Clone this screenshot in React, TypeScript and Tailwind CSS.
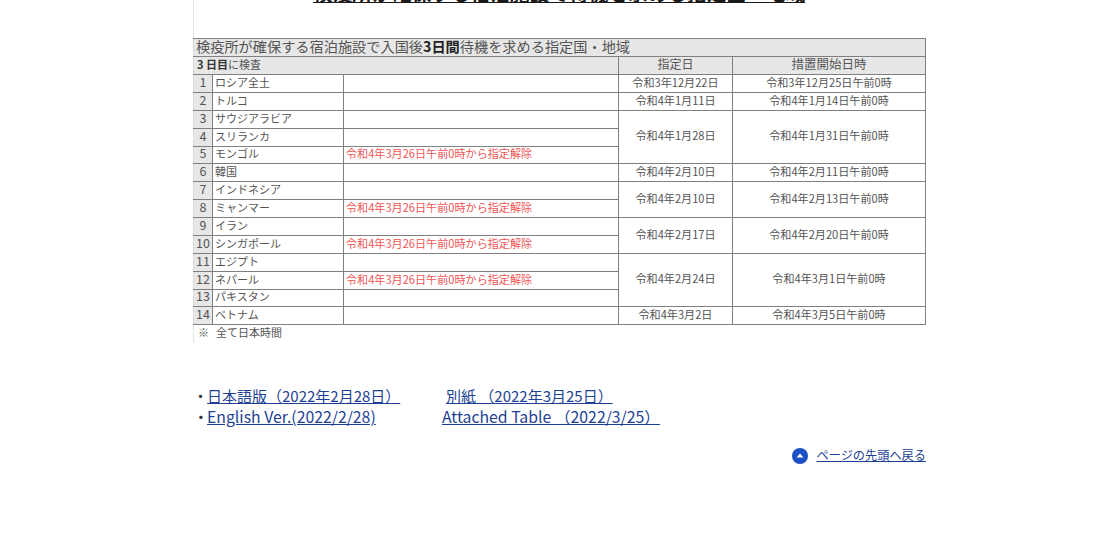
const rows: { name: string; note?: boolean; h: string }[] = [
  { name: 'ロシア全土', h: 'h-[18px]' },
  { name: 'トルコ', h: 'h-[18px]' },
  { name: 'サウジアラビア', h: 'h-[18px]' },
  { name: 'スリランカ', h: 'h-[18px]' },
  { name: 'モンゴル', note: true, h: 'h-[17px]' },
  { name: '韓国', h: 'h-[18px]' },
  { name: 'インドネシア', h: 'h-[18px]' },
  { name: 'ミャンマー', note: true, h: 'h-[18px]' },
  { name: 'イラン', h: 'h-[18px]' },
  { name: 'シンガポール', note: true, h: 'h-[18px]' },
  { name: 'エジプト', h: 'h-[18px]' },
  { name: 'ネパール', note: true, h: 'h-[18px]' },
  { name: 'パキスタン', h: 'h-[17px]' },
  { name: 'ベトナム', h: 'h-[18px]' },
];

// index of the row where each date cell starts
const dates: Record<number, { day: string; start: string; span: number }> = {
  0: { day: '令和3年12月22日', start: '令和3年12月25日午前0時', span: 1 },
  1: { day: '令和4年1月11日', start: '令和4年1月14日午前0時', span: 1 },
  2: { day: '令和4年1月28日', start: '令和4年1月31日午前0時', span: 3 },
  5: { day: '令和4年2月10日', start: '令和4年2月11日午前0時', span: 1 },
  6: { day: '令和4年2月10日', start: '令和4年2月13日午前0時', span: 2 },
  8: { day: '令和4年2月17日', start: '令和4年2月20日午前0時', span: 2 },
  10: { day: '令和4年2月24日', start: '令和4年3月1日午前0時', span: 3 },
  13: { day: '令和4年3月2日', start: '令和4年3月5日午前0時', span: 1 },
};

const cell = 'border border-[#808080] p-0 pb-[4px] whitespace-nowrap';

export default function App() {
  return (
    <div className="h-[538px] w-[1118px] overflow-hidden bg-white pl-[193px] font-['Noto_Sans_CJK_JP','Noto_Sans',sans-serif]">
      <div className="w-[733px]">
        <div className="border-l border-[#e6e6e6]">
          {/* heading is cut by the top of the window */}
          <h2 className="-mt-[22px] h-[60px] pl-[119px] text-[19.7px] leading-[30px] font-bold whitespace-nowrap text-[#1a1a1a]">
            <span className="underline">検疫所が確保する宿泊施設で待機を求める指定国・地域</span>
          </h2>

          <table className="-ml-px w-[733px] table-fixed border-collapse text-[11.1px] leading-[12px] text-[#555]">
            <colgroup>
              <col className="w-[19px]" />
              <col className="w-[131px]" />
              <col className="w-[275px]" />
              <col className="w-[114px]" />
              <col className="w-[193px]" />
            </colgroup>
            <thead>
              <tr className="h-[18px] bg-[#e7e7e7]">
                <th colSpan={5} className={`${cell} border-l-[#dcdcdc] pl-[2px] text-left text-[14.2px] font-normal`}>
                  検疫所が確保する宿泊施設で入国後<span className="font-bold text-[#222]">3日間</span>待機を求める指定国・地域
                </th>
              </tr>
              <tr className="h-[18px] bg-[#e7e7e7]">
                <th colSpan={3} className={`${cell} border-l-[#dcdcdc] pl-[3px] text-left text-[11px] font-normal`}>
                  <span className="font-bold text-[#333]">3 日目</span>に検査
                </th>
                <th className={`${cell} text-[12px] font-normal`}>指定日</th>
                <th className={`${cell} text-[12.5px] font-normal`}>措置開始日時</th>
              </tr>
            </thead>
            <tbody>
              {rows.map((row, i) => (
                <tr key={row.name} className={row.h}>
                  <td className={`${cell} border-l-[#dcdcdc] bg-[#e7e7e7] text-center text-[12.5px]`}>{i + 1}</td>
                  <td className={`${cell} pl-[2px] text-[11px]`}>{row.name}</td>
                  <td className={`${cell} pl-[2px] text-[#f05555]`}>
                    {row.note && '令和4年3月26日午前0時から指定解除'}
                  </td>
                  {dates[i] && (
                    <td rowSpan={dates[i].span} className={`${cell} text-center`}>
                      {dates[i].day}
                    </td>
                  )}
                  {dates[i] && (
                    <td rowSpan={dates[i].span} className={`${cell} text-center`}>
                      {dates[i].start}
                    </td>
                  )}
                </tr>
              ))}
            </tbody>
          </table>

          <p className="flex h-[18px] pl-[4px] text-[11px] leading-[14px] text-[#555]">
            <span className="w-[18px]">※</span>
            <span>全て日本時間</span>
          </p>
        </div>

        <div className="mt-[42px] leading-[21px] whitespace-nowrap text-[#333]">
          <div className="flex text-[15px]">
            <span className="w-[14px]">・</span>
            <a href="#" className="w-[192px] text-[#1d3f94] underline">日本語版（2022年2月28日）</a>
            <a href="#" className="ml-[47px] text-[#1d3f94] underline">別紙 （2022年3月25日）</a>
          </div>
          <div className="flex text-[15.8px]">
            <span className="w-[14px]">・</span>
            <a href="#" className="w-[174px] text-[#1d3f94] underline">English Ver.(2022/2/28)</a>
            <a href="#" className="ml-[61px] text-[#1d3f94] underline">Attached Table （2022/3/25）</a>
          </div>
        </div>

        <div className="mt-[18px] flex items-center justify-end gap-[9px] text-[12.2px] leading-[21px]">
          <span className="flex h-4 w-4 items-center justify-center rounded-full bg-[#1b4fc4]">
            <svg width="8" height="5" viewBox="0 0 8 5">
              <path d="M4 0.5 L7.5 4.5 H0.5 Z" fill="#fff" />
            </svg>
          </span>
          <a href="#" className="text-[#1d3f94] underline">ページの先頭へ戻る</a>
        </div>
      </div>
    </div>
  );
}
